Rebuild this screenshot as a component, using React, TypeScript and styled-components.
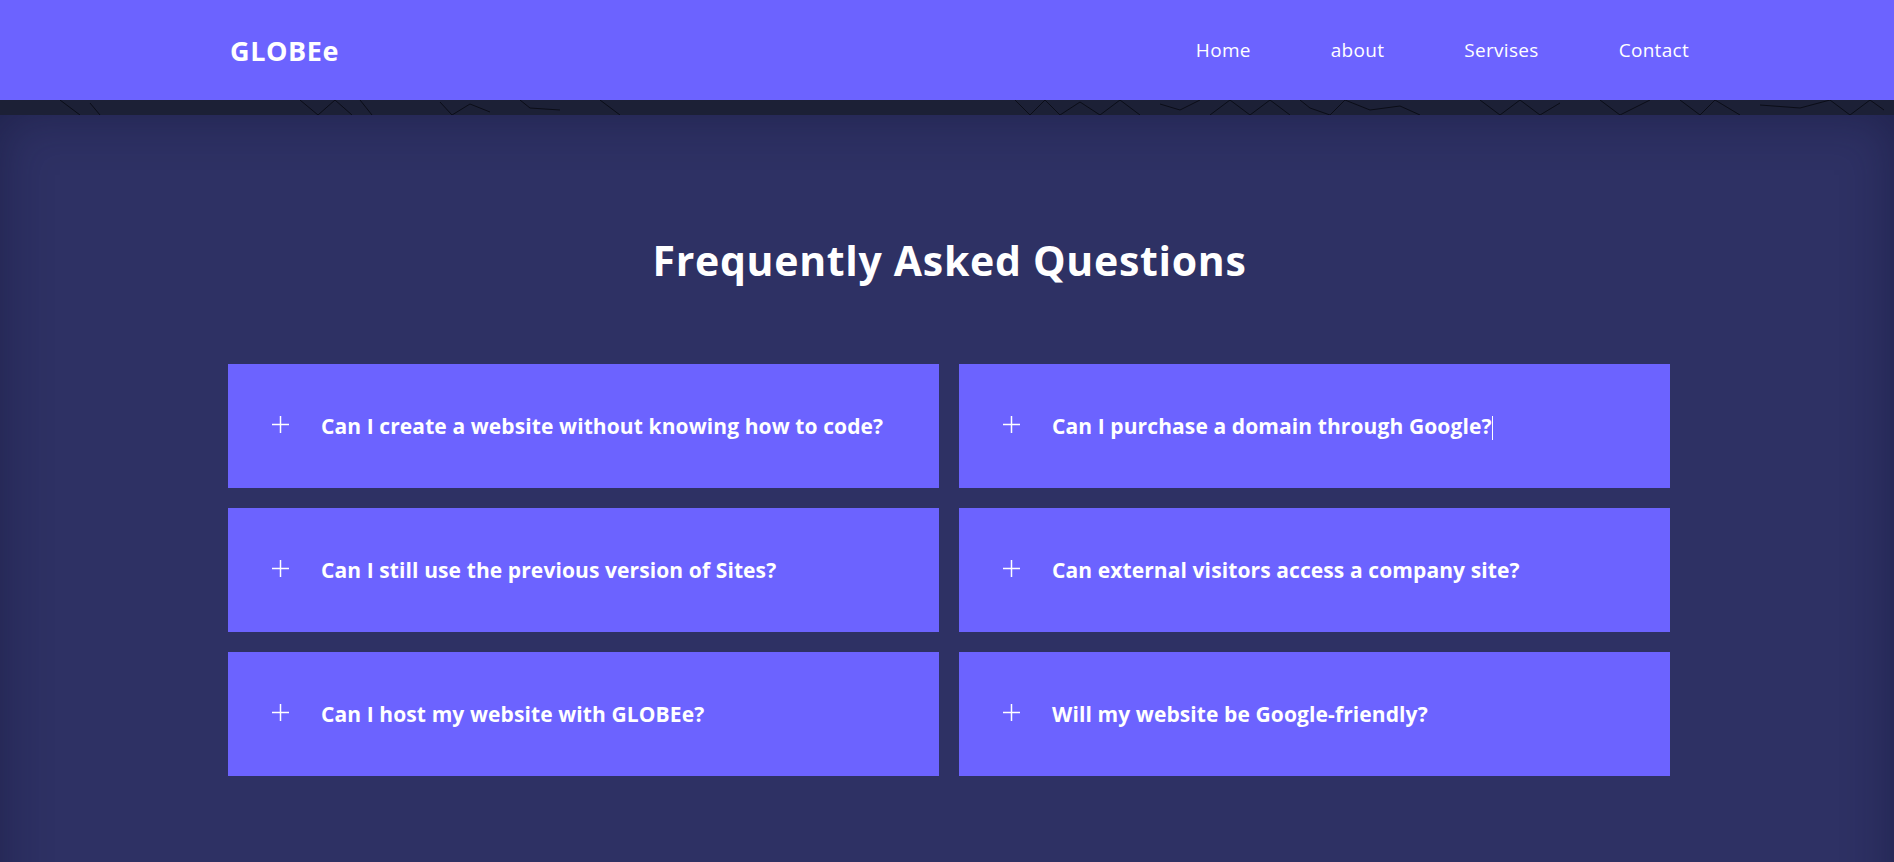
import styled, { createGlobalStyle } from "styled-components";

const GlobalStyle = createGlobalStyle`
  html, body {
    margin: 0;
    padding: 0;
    background-color: #2e3164;
    font-family: "Open Sans", "Liberation Sans", sans-serif;
    overflow: hidden;
  }
`;

const questions = [
  "Can I create a website without knowing how to code?",
  "Can I purchase a domain through Google?",
  "Can I still use the previous version of Sites?",
  "Can external visitors access a company site?",
  "Can I host my website with GLOBEe?",
  "Will my website be Google-friendly?"
];

const navLinks = ["Home", "about", "Servises", "Contact"];

export const Header = styled.header`
  height: 100px;
  background-color: #6c63ff;
  display: flex;
  align-items: center;
  justify-content: space-between;
  padding: 0 205px 0 230px;
  box-sizing: border-box;
`;

export const Logo = styled.a`
  color: #ffffff;
  font-size: 27px;
  font-weight: 700;
  letter-spacing: 0.6px;
  text-decoration: none;
`;

export const Nav = styled.nav`
  display: flex;
  align-items: center;
  gap: 80px;
`;

export const NavLink = styled.a`
  color: #ffffff;
  font-size: 19px;
  font-weight: 400;
  letter-spacing: 0.3px;
  text-decoration: none;
`;

export const MapStrip = styled.div`
  height: 15px;
  background-color: #1c2036;
  overflow: hidden;

  svg {
    display: block;
  }
`;

export const Section = styled.section`
  height: 820px;
  box-sizing: border-box;
  padding: 121px 223px 0 228px;
  box-shadow: inset 0 0 50px rgba(16, 18, 48, 0.45);
`;

export const Title = styled.h2`
  margin: 0 0 80px;
  color: #ffffff;
  text-align: center;
  font-size: 41px;
  line-height: 48px;
  font-weight: 700;
  letter-spacing: 0.7px;
`;

export const Grid = styled.div`
  display: grid;
  grid-template-columns: repeat(2, 711px);
  grid-auto-rows: 124px;
  gap: 20px;
`;

export const Card = styled.button`
  display: flex;
  align-items: center;
  gap: 32px;
  padding: 0 0 0 44px;
  border: none;
  background-color: #6c63ff;
  color: #ffffff;
  font-family: inherit;
  text-align: left;
  cursor: pointer;
`;

export const PlusIcon = styled.svg`
  width: 17px;
  height: 17px;
  flex-shrink: 0;
  margin-top: -3px;
`;

export const Question = styled.span`
  font-size: 21px;
  font-weight: 700;
  letter-spacing: 0.1px;
`;

export const Caret = styled.span`
  display: inline-block;
  width: 1px;
  height: 24px;
  background-color: #ffffff;
  vertical-align: middle;
`;

const mapLines = [
  "M60 0 L80 15 M90 3 L100 15",
  "M300 0 L318 15 L335 0 L352 15 M360 0 L372 15",
  "M440 2 L452 15 L470 4 L490 12 M520 0 L530 8 L560 10 M600 0 L620 15",
  "M1015 0 L1030 15 L1045 0 L1060 15 L1080 2 L1100 15 L1120 0 L1140 15",
  "M1160 4 L1180 10 L1200 0 M1210 15 L1230 0 L1250 15 L1270 0 L1290 15",
  "M1300 0 L1310 8 L1330 15 L1345 0 L1370 10 L1400 6 L1420 15",
  "M1480 0 L1500 15 L1520 0 L1540 15 L1560 3 M1600 0 L1620 15 L1650 0",
  "M1680 0 L1700 15 L1715 0 L1740 15 M1760 5 L1800 8 L1830 0 L1850 15 L1870 0 L1884 10"
];

export default function App() {
  return (
    <>
      <GlobalStyle />
      <Header>
        <Logo href="#">GLOBEe</Logo>
        <Nav>
          {navLinks.map((link) => (
            <NavLink key={link} href="#">
              {link}
            </NavLink>
          ))}
        </Nav>
      </Header>
      <MapStrip>
        <svg width="1894" height="15" viewBox="0 0 1894 15">
          {mapLines.map((d, i) => (
            <path key={i} d={d} fill="none" stroke="#0b0d18" strokeWidth="1" />
          ))}
        </svg>
      </MapStrip>
      <Section>
        <Title>Frequently Asked Questions</Title>
        <Grid>
          {questions.map((q, i) => (
            <Card key={q}>
              <PlusIcon viewBox="0 0 16 16">
                <path d="M8 0 V16 M0 8 H16" stroke="#ffffff" strokeWidth="1.4" />
              </PlusIcon>
              <Question>
                {q}
                {i === 1 && <Caret />}
              </Question>
            </Card>
          ))}
        </Grid>
      </Section>
    </>
  );
}
